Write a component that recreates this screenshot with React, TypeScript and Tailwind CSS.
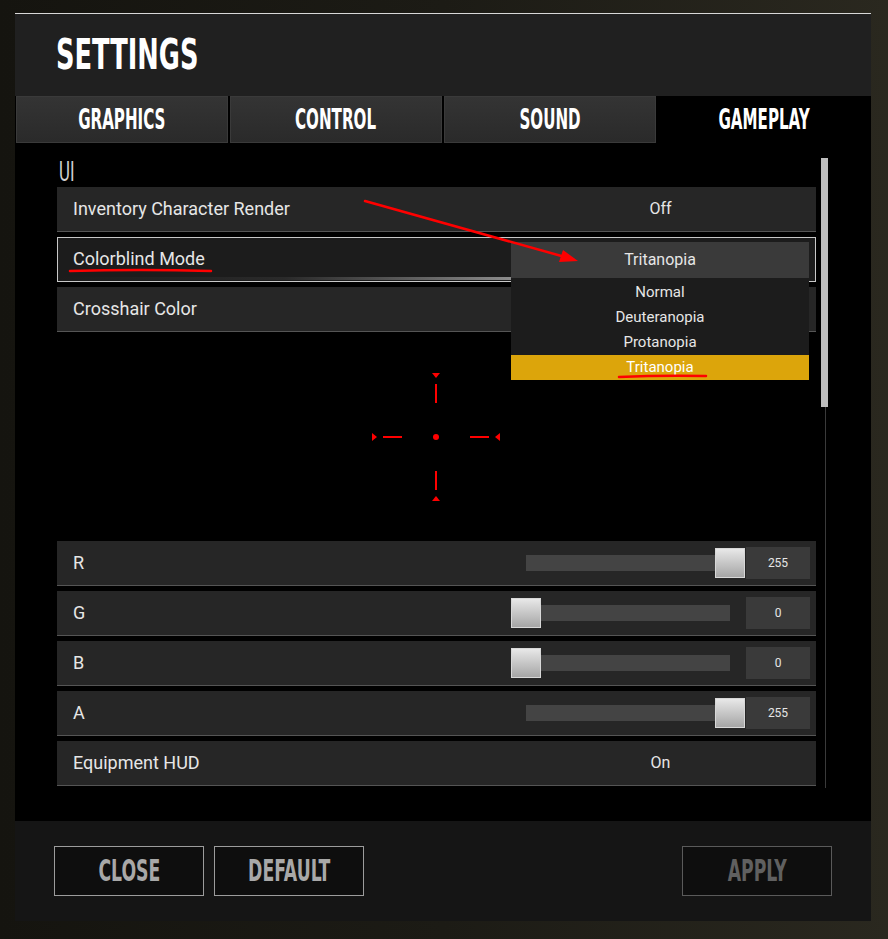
import React from 'react'

const condensed = "font-['DejaVu_Sans_Condensed',sans-serif] font-bold"
const body = "font-['Roboto',sans-serif]"

const tabs = ['GRAPHICS', 'CONTROL', 'SOUND', 'GAMEPLAY']
const colorblindOptions = ['Normal', 'Deuteranopia', 'Protanopia', 'Tritanopia']

const channels = [
  { label: 'R', value: 255 },
  { label: 'G', value: 0 },
  { label: 'B', value: 0 },
  { label: 'A', value: 255 },
]

// narrow display face: squeeze the condensed font horizontally
const Squeeze = ({ children, className = '' }: { children: React.ReactNode; className?: string }) => (
  <span className={`inline-block ${className}`}>{children}</span>
)

const Row = ({ children, className = '' }: { children: React.ReactNode; className?: string }) => (
  <div className={`relative flex h-[45px] items-center border-b border-[#555] bg-[#262626] ${className}`}>
    {children}
  </div>
)

const Label = ({ text }: { text: string }) => (
  <div className={`${body} flex-1 pb-[1px] pl-[16px] text-[18px] text-[#e6e6e6]`}>{text}</div>
)

const ToggleRow = ({ label, value }: { label: string; value: string }) => (
  <Row>
    <Label text={label} />
    <div className={`${body} mr-[6px] w-[299px] pb-[1px] text-center text-[16px] text-[#e6e6e6]`}>{value}</div>
  </Row>
)

const SliderRow = ({ label, value }: { label: string; value: number }) => (
  <Row>
    <Label text={label} />
    <div className="mr-[6px] flex w-[299px] items-center">
      <div className="relative h-[30px] w-[234px]">
        <div className="absolute top-[7px] right-[15px] left-[15px] h-[16px] bg-[#444]" />
        <div
          className="absolute top-0 h-[30px] w-[30px] border border-[#d8d8d8] bg-gradient-to-b from-[#e8e8e8] to-[#a6a6a6]"
          style={{ left: (value / 255) * 204 }}
        />
      </div>
      <div className={`${body} ml-[1px] flex h-[32px] w-[64px] items-center justify-center bg-[#3a3a3a] text-[12px] text-[#e6e6e6]`}>
        {value}
      </div>
    </div>
  </Row>
)

const ColorblindRow = () => (
  <div className="relative flex h-[45px] items-center border border-[#c8c8c8] bg-[#1c1c1c]">
    <div className={`${body} flex-1 pb-[2px] pl-[15px] text-[18px] text-[#e6e6e6]`}>Colorblind Mode</div>
    <div className={`${body} mr-[6px] flex h-[36px] w-[298px] items-center justify-center self-start mt-[4px] bg-[#3a3a3a] text-[16px] text-[#e6e6e6]`}>
      Tritanopia
    </div>
    <div className="absolute bottom-[1px] left-0 h-[3px] w-[453px] bg-gradient-to-r from-transparent via-[#2a2a2a] to-[#8c8c8c]" />
    <div className="absolute top-[42px] left-[453px] z-10 w-[298px] bg-[#1c1c1c]">
      {colorblindOptions.map(option => (
        <div
          key={option}
          className={`${body} flex h-[25px] items-center justify-center text-[15px] ${
            option === 'Tritanopia' ? 'bg-[#dca50b] text-white' : 'text-[#e6e6e6]'
          }`}>
          {option}
        </div>
      ))}
    </div>
  </div>
)

const Crosshair = () => (
  <div className="flex h-[199px] items-center justify-center">
    <svg width="132" height="132" viewBox="0 0 132 132" className="ml-[-2px]">
      <g fill="#ff0000" stroke="none">
        <circle cx="66" cy="66" r="3" />
        <rect x="65" y="13" width="2" height="19" />
        <rect x="65" y="100" width="2" height="19" />
        <rect x="13" y="65" width="19" height="2" />
        <rect x="100" y="65" width="19" height="2" />
        <polygon points="62,2 70,2 66,7" />
        <polygon points="62,130 70,130 66,125" />
        <polygon points="2,62 2,70 7,66" />
        <polygon points="130,62 130,70 125,66" />
      </g>
    </svg>
  </div>
)

const FooterButton = ({ label, dim }: { label: string; dim?: boolean }) => (
  <div
    className={`flex h-[50px] w-[150px] items-center justify-center border bg-[#0e0e0e] ${
      dim ? 'border-[#5a5a5a] text-[#606060]' : 'border-[#9c9c9c] text-[#a8a8a8]'
    }`}>
    <Squeeze className={`${condensed} scale-x-[0.64] text-[30px] leading-none`}>{label}</Squeeze>
  </div>
)

const App = () => (
  <div className="relative h-[939px] w-[888px] overflow-hidden bg-gradient-to-r from-[#15140f] via-[#1c1b15] to-[#2a281f] pt-[13px] pl-[15px]">
    <div className="w-[856px] border-t border-[#d8d8d8]">
      <header className="flex h-[82px] items-center bg-[#202020] pl-[41px]">
        <Squeeze className={`${condensed} origin-left scale-x-[0.68] text-[42px] leading-none text-white`}>SETTINGS</Squeeze>
      </header>

      <nav className="flex h-[47px] gap-[2px] bg-black pl-[1px]">
        {tabs.map(tab => (
          <div
            key={tab}
            className={`flex items-center justify-center ${
              tab === 'GAMEPLAY' ?
                'flex-1 bg-black'
              : 'w-[212px] border border-[#3a3a3a] bg-gradient-to-b from-[#343434] to-[#2a2a2a]'
            }`}>
            <Squeeze className={`${condensed} scale-x-[0.6] text-[28px] leading-none text-white`}>{tab}</Squeeze>
          </div>
        ))}
      </nav>

      <main className="flex h-[678px] bg-black pl-[42px]">
        <div className="w-[759px] pt-[14px]">
          <div className="flex h-[30px] items-center pl-[2px]">
            <span className={`${body} inline-block origin-left scale-x-[0.6] text-[28px] leading-none text-[#d0d0d0]`}>
              UI
            </span>
          </div>
          <div className="flex flex-col gap-[5px]">
            <ToggleRow label="Inventory Character Render" value="Off" />
            <ColorblindRow />
            <ToggleRow label="Crosshair Color" value="" />
            <Crosshair />
            {channels.map(channel => (
              <SliderRow key={channel.label} label={channel.label} value={channel.value} />
            ))}
            <ToggleRow label="Equipment HUD" value="On" />
          </div>
        </div>

        <div className="relative mt-[15px] ml-[5px] h-[630px] w-[7px]">
          <div className="absolute top-0 bottom-0 left-[4px] w-px bg-[#3a3a3a]" />
          <div className="absolute top-0 left-0 h-[249px] w-[7px] bg-[#bdbdbd]" />
        </div>
      </main>

      <footer className="flex h-[100px] items-center justify-between bg-[#151515] px-[39px]">
        <div className="flex gap-[10px]">
          <FooterButton label="CLOSE" />
          <FooterButton label="DEFAULT" />
        </div>
        <FooterButton label="APPLY" dim />
      </footer>
    </div>

    {/* red markup drawn on top of the settings panel */}
    <svg className="pointer-events-none absolute inset-0 z-20" width="888" height="939" viewBox="0 0 888 939">
      <g stroke="#ff0000" strokeWidth="2.5" strokeLinecap="round" fill="none">
        <line x1="365" y1="201" x2="565" y2="257" />
        <path d="M70 271 Q140 269 211 271" />
        <path d="M619 377 Q662 375 706 376" />
      </g>
      <polygon points="578,261 559,262 563,250" fill="#ff0000" />
    </svg>
  </div>
)

export default App
